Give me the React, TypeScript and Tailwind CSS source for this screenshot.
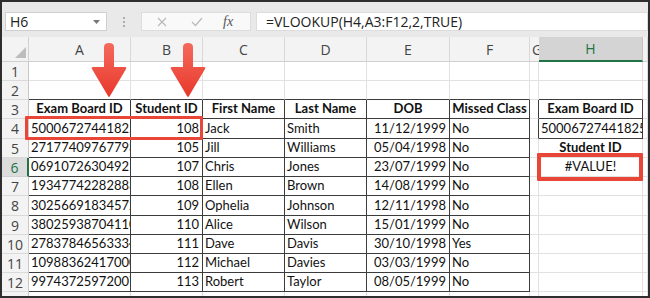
import React from "react";

const cols = ["A", "B", "C", "D", "E", "F", "G", "H", ""];

type Cell = { t?: string; bold?: boolean; align?: "l" | "r" | "c" };

const rows: Cell[][] = [];
for (let i = 0; i < 13; i++) rows.push(Array.from({ length: 9 }, () => ({})));

const data: [string, string, string, string, string, string][] = [
  ["50006727441825", "108", "Jack", "Smith", "11/12/1999", "No"],
  ["27177409767793", "105", "Jill", "Williams", "05/04/1998", "No"],
  ["06910726304921", "107", "Chris", "Jones", "23/07/1999", "No"],
  ["19347742282883", "108", "Ellen", "Brown", "14/08/1999", "No"],
  ["30256691834572", "109", "Ophelia", "Johnson", "12/11/1998", "No"],
  ["38025938704110", "110", "Alice", "Wilson", "15/01/1999", "No"],
  ["27837846563334", "111", "Dave", "Davis", "30/10/1998", "Yes"],
  ["10988362417000", "112", "Michael", "Davies", "03/03/1999", "No"],
  ["99743725972007", "113", "Robert", "Taylor", "08/05/1999", "No"],
];

const heads = ["Exam Board ID", "Student ID", "First Name", "Last Name", "DOB", "Missed Class"];
heads.forEach((h, i) => (rows[2][i] = { t: h, bold: true, align: "c" }));
data.forEach((r, ri) => {
  rows[3 + ri][0] = { t: r[0], align: "l" };
  rows[3 + ri][1] = { t: r[1], align: "r" };
  rows[3 + ri][2] = { t: r[2], align: "l" };
  rows[3 + ri][3] = { t: r[3], align: "l" };
  rows[3 + ri][4] = { t: r[4], align: "r" };
  rows[3 + ri][5] = { t: r[5], align: "l" };
});
rows[2][7] = { t: "Exam Board ID", bold: true, align: "c" };
rows[3][7] = { t: "50006727441825", align: "l" };
rows[4][7] = { t: "Student ID", bold: true, align: "c" };
rows[5][7] = { t: "#VALUE!", align: "c" };

function cellBorders(r: number, c: number): string {
  const inTable = r >= 2 && r <= 11 && c >= 0 && c <= 5;
  const inH = r >= 2 && r <= 3 && c === 7;
  const rightDark = inTable || inH || (c === 6 && r >= 2 && r <= 3);
  const bottomDark =
    inTable || inH || (r === 1 && c >= 0 && c <= 5) || (r === 1 && c === 7);
  return [
    "border-r border-b",
    rightDark ? "border-r-[#3c3c3c]" : "border-r-[#e1e1e1]",
    bottomDark ? "border-b-[#3c3c3c]" : "border-b-[#e1e1e1]",
  ].join(" ");
}

function Arrow({ left, top }: { left: number; top: number }) {
  return (
    <svg
      className="absolute"
      style={{ left, top }}
      width="38"
      height="60"
      viewBox="0 0 38 60"
    >
      <defs>
        <linearGradient id={`g${left}`} x1="0" y1="0" x2="0" y2="1">
          <stop offset="0" stopColor="#f46a5c" />
          <stop offset="1" stopColor="#e8382b" />
        </linearGradient>
      </defs>
      <path
        d="M14 5 Q14 1 19 1 Q24 1 24 5 L24 25 L35 25 Q37 25 36 27 L20 54 Q19 56 18 54 L2 27 Q1 25 3 25 L14 25 Z"
        fill={`url(#g${left})`}
      />
    </svg>
  );
}

export default function App() {
  const sans = { fontFamily: "'Open Sans', 'Noto Sans', sans-serif" };
  return (
    <div
      className="relative w-[650px] h-[298px] overflow-hidden border-2 border-[#2e2e2e] bg-[#e9e9e9] flex flex-col"
      style={{ fontFamily: "Lato, 'Liberation Sans', sans-serif" }}
    >
      {/* Formula bar */}
      <div className="h-[35px] shrink-0 flex items-start pt-[10px]" style={sans}>
        <div className="ml-[3px] w-[102px] h-[19px] bg-white border border-[#cfcfcf] flex items-center justify-between pl-[4px] pr-[6px]">
          <span className="text-[14px] text-[#222] leading-none">H6</span>
          <svg width="7" height="4" viewBox="0 0 7 4">
            <path d="M0 0 L7 0 L3.5 4 Z" fill="#777" />
          </svg>
        </div>
        <div className="w-[34px] h-[19px] flex flex-col items-center justify-center gap-[2px]">
          <span className="w-[2px] h-[2px] bg-[#9a9a9a] rounded-full" />
          <span className="w-[2px] h-[2px] bg-[#9a9a9a] rounded-full" />
          <span className="w-[2px] h-[2px] bg-[#9a9a9a] rounded-full" />
        </div>
        <div className="w-[110px] h-[19px] bg-[#f9f9f9] border border-[#dcdcdc] flex items-center">
          <svg className="ml-[15px]" width="10" height="10" viewBox="0 0 10 10">
            <path d="M1 1 L9 9 M9 1 L1 9" stroke="#b9b9b9" strokeWidth="1.2" />
          </svg>
          <svg className="ml-[24px]" width="12" height="10" viewBox="0 0 12 10">
            <path d="M1 5 L4.5 8.5 L11 1" stroke="#b9b9b9" strokeWidth="1.2" fill="none" />
          </svg>
          <span
            className="ml-[20px] text-[14px] italic text-[#555] leading-none"
            style={{ fontFamily: "'Liberation Serif', serif" }}
          >
            fx
          </span>
        </div>
        <div className="ml-[5px] flex-1 h-[19px] bg-white border border-[#dcdcdc] flex items-center pl-[9px]">
          <span className="text-[14px] text-[#222] leading-none">=VLOOKUP(H4,A3:F12,2,TRUE)</span>
        </div>
      </div>

      {/* Sheet */}
      <div className="flex-1 grid grid-cols-[27px_102px_72px_82px_82px_83px_80px_9px_104px_1fr] grid-rows-[25px_19px_19px_19px_20px_19px_19px_19px_20px_19px_19px_19px_19px_1fr] bg-white">
        <div className="bg-[#f3f3f3] border-r border-b border-[#d0d0d0] relative flex items-end justify-end pr-[2px] pb-[3px]">
          <svg width="11" height="11" viewBox="0 0 11 11">
            <path d="M11 0 L11 11 L0 11 Z" fill="#bdbdbd" />
          </svg>
        </div>
        {cols.map((c, i) => (
          <div
            key={c + i}
            className={
              i === 7
                ? "bg-[#d4d4d4] border-r border-r-[#c2c2c2] border-b-2 border-b-[#217346] flex items-center justify-center text-[#217346] text-[14px]"
                : i === 6
                ? "bg-[#f3f3f3] border-b border-b-[#d0d0d0] flex items-center justify-start pl-[2px] overflow-hidden text-[#444] text-[14px]"
                : "bg-[#f3f3f3] border-r border-r-[#d8d8d8] border-b border-b-[#d0d0d0] flex items-center justify-center text-[#444] text-[14px]"
            }
            style={sans}
          >
            {c}
          </div>
        ))}

        {rows.map((row, r) => (
          <React.Fragment key={r}>
            <div
              className={
                r === 5
                  ? "bg-[#dcdcdc] border-r-2 border-r-[#217346] border-b border-b-[#d0d0d0] flex items-center justify-center text-[#217346] text-[14px]"
                  : "bg-[#f3f3f3] border-r border-b border-r-[#c8c8c8] border-b-[#dadada] flex items-center justify-center text-[#444] text-[14px]"
              }
              style={sans}
            >
              {r < 12 ? r + 1 : "13"}
            </div>
            {row.map((cell, c) => (
              <div
                key={c}
                className={
                  cellBorders(r, c) +
                  " overflow-hidden whitespace-nowrap flex items-center text-[13px] text-[#111] " +
                  (cell.align === "r"
                    ? "justify-end pr-[3px]"
                    : cell.align === "c"
                    ? "justify-center"
                    : "justify-start pl-[2px]") +
                  (cell.bold ? " font-bold" : "")
                }
              >
                {cell.t}
              </div>
            ))}
          </React.Fragment>
        ))}
      </div>

      {/* Overlays: highlight boxes and arrows */}
      <div className="absolute left-[23px] top-[114px] w-[178px] h-[24px] border-[3px] border-[#ea4638] rounded-[1px]" />
      <div className="absolute left-[535px] top-[151px] w-[106px] h-[28px] border-[4px] border-[#ea4638] rounded-[1px]" />
      <Arrow left={88} top={40} />
      <Arrow left={167} top={40} />
    </div>
  );
}
